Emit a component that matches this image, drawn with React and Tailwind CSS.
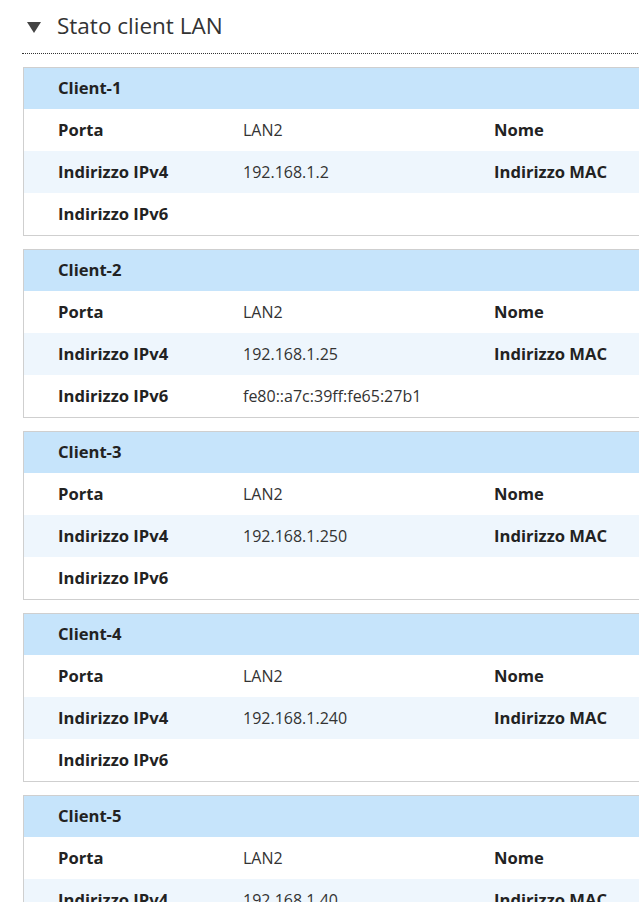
import React from "react";

const clients = [
  { name: "Client-1", ipv4: "192.168.1.2", ipv6: "" },
  { name: "Client-2", ipv4: "192.168.1.25", ipv6: "fe80::a7c:39ff:fe65:27b1" },
  { name: "Client-3", ipv4: "192.168.1.250", ipv6: "" },
  { name: "Client-4", ipv4: "192.168.1.240", ipv6: "" },
  { name: "Client-5", ipv4: "192.168.1.40", ipv6: "" },
];

function Row({ bg, l1, v1, l2 }) {
  return (
    <div className={`grid grid-cols-[185px_251px_1fr] h-[42px] items-center ${bg}`}>
      <div className="pl-[34px] font-bold text-[16.6px] text-[#222]">{l1}</div>
      <div className="pl-[34px] text-[#333]">{v1}</div>
      <div className="pl-[34px] font-bold text-[16.6px] text-[#222]">{l2}</div>
    </div>
  );
}

function Card({ c }) {
  return (
    <div className="w-[760px] border border-[#cfcfcf]">
      <div className="h-[41px] bg-[#c6e4fb] flex items-center pl-[34px] font-bold text-[16.6px] text-[#222]">
        {c.name}
      </div>
      <Row bg="bg-white" l1="Porta" v1="LAN2" l2="Nome" />
      <Row bg="bg-[#eef6fd]" l1="Indirizzo IPv4" v1={c.ipv4} l2="Indirizzo MAC" />
      <Row bg="bg-white" l1="Indirizzo IPv6" v1={c.ipv6} l2="" />
    </div>
  );
}

export default function App() {
  return (
    <div
      className="w-[639px] h-[902px] overflow-hidden bg-white text-[16px]"
      style={{ fontFamily: '"Open Sans", "Noto Sans", sans-serif' }}
    >
      <div className="pl-[22px]">
        <div className="h-[54px] flex items-center border-b border-dotted border-[#333] w-[700px]">
          <svg width="14" height="11" viewBox="0 0 14 11" className="ml-[5px] mt-[2px]">
            <polygon points="0,0 14,0 7,11" fill="#444" />
          </svg>
          <span className="ml-[16px] text-[22.5px] text-[#333] leading-none -mt-[1px]">Stato client LAN</span>
        </div>
        <div className="pl-[1px] pt-[13px] flex flex-col gap-[13px]">
          {clients.map((c) => (
            <Card key={c.name} c={c} />
          ))}
        </div>
      </div>
    </div>
  );
}
